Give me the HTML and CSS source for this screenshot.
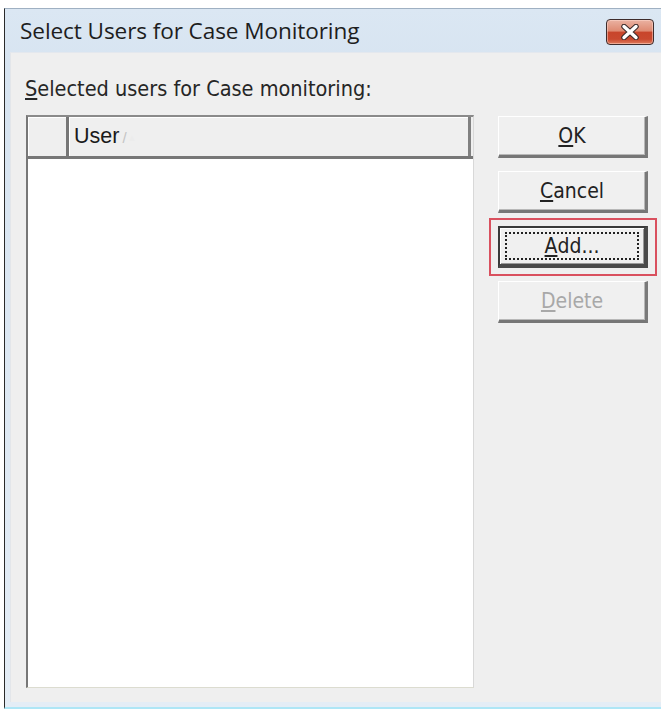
FILE: index.html
```html
<!DOCTYPE html>
<html lang="en">
<head>
<meta charset="utf-8">
<title>Select Users for Case Monitoring</title>
<link rel="stylesheet" href="styles.css">
</head>
<body>
<div class="window">
  <div class="titlebar">
    <span class="title">Select Users for Case Monitoring</span>
    <button class="close" aria-label="Close">
      <svg width="24" height="16" viewBox="0 0 24 16">
        <path d="M6 2.5 L18 13.5 M18 2.5 L6 13.5" stroke="#3b2b2b" stroke-width="5.5" stroke-linecap="round"/>
        <path d="M6 2.5 L18 13.5 M18 2.5 L6 13.5" stroke="#ffffff" stroke-width="3.4" stroke-linecap="round"/>
      </svg>
    </button>
  </div>
  <div class="client">
    <div class="caption"><u>S</u>elected users for Case monitoring:</div>
    <div class="body">
      <div class="listview">
        <div class="lv-header">
          <div class="lv-col lv-col-icon"></div>
          <div class="lv-col lv-col-user">User <span class="sort">/<span class="sort-tip">&#9650;</span></span></div>
        </div>
        <div class="lv-rows"></div>
      </div>
      <div class="buttons">
        <button class="btn"><u>O</u>K</button>
        <button class="btn"><u>C</u>ancel</button>
        <div class="focus-mark">
          <button class="btn btn-default"><span class="focus-rect"><u>A</u>dd...</span></button>
        </div>
        <button class="btn" disabled><u>D</u>elete</button>
      </div>
    </div>
  </div>
</div>
</body>
</html>
```
FILE: styles.css
```css
html, body {
  margin: 0;
  padding: 0;
  background: #ffffff;
  overflow: hidden;
  height: 709px;
}

.window {
  margin: 8px 0 0 4px;
  width: 664px;
  height: 701px;
  box-sizing: border-box;
  border-left: 1px solid #2a2a2a;
  border-top: 1px solid #9fb0c2;
  border-bottom: 2px solid #aee6f6;
  background: linear-gradient(#dbe7f3, #d7e4f1 60px, #e4edf6);
  display: flex;
  flex-direction: column;
  padding: 0 0 5px 5px;
}

.titlebar {
  height: 43px;
  display: flex;
  align-items: center;
  justify-content: space-between;
  padding: 0 14px 0 10px;
}

.title {
  font-family: "Open Sans", "DejaVu Sans", sans-serif;
  font-size: 22.6px;
  color: #1e1e1e;
  letter-spacing: -0.1px;
}

.close {
  width: 48px;
  height: 26px;
  margin-top: 2px;
  border: 1px solid #3e2c2c;
  border-radius: 4px;
  background: linear-gradient(#eab2a2 0%, #de8a72 45%, #c8452b 52%, #c9492f 80%, #e07c5c 100%);
  display: flex;
  align-items: center;
  justify-content: center;
  padding: 0;
  box-shadow: inset 0 0 0 1px rgba(255, 220, 210, 0.5);
}

.client {
  flex: 1;
  background: #efefef;
  border-top: 1px solid #e4e8ee;
  border-left: 1px solid #e3e6ea;
  padding: 24px 14px 0 14px;
  display: flex;
  flex-direction: column;
  font-family: "DejaVu Sans Condensed", "DejaVu Sans", sans-serif;
}

.caption {
  font-size: 21.5px;
  color: #262626;
  height: 38px;
  line-height: 30px;
  margin-top: -3px;
  margin-bottom: 3px;
}

.body {
  display: flex;
  gap: 24px;
  align-items: flex-start;
}

.listview {
  width: 448px;
  height: 573px;
  box-sizing: border-box;
  margin-left: 1px;
  border-left: 2px solid #777777;
  border-top: 2px solid #8a8a8a;
  border-right: 1px solid #d8d8d8;
  border-bottom: 1px solid #dcdcd0;
  background: #ffffff;
  display: flex;
  flex-direction: column;
}

.lv-header {
  height: 42px;
  display: flex;
  background: #efefef;
  border-bottom: 3px solid #777777;
  box-sizing: border-box;
  font-family: "Liberation Sans", Arial, sans-serif;
}

.lv-col {
  display: flex;
  align-items: center;
  box-sizing: border-box;
}

.lv-col-icon {
  width: 41px;
  border-right: 3px solid #777777;
  box-shadow: inset 1px 1px 0 #ffffff;
}

.lv-col-user {
  flex: 1;
  padding-left: 5px;
  font-size: 21.5px;
  color: #1a1a1a;
  border-right: 3px solid #808080;
  margin-right: 2px;
  box-shadow: inset 1px 1px 0 #ffffff;
}

.sort {
  color: #c4c4c4;
  font-size: 15px;
  margin-left: 3px;
  margin-top: 2px;
  display: flex;
  align-items: center;
}

.sort-tip {
  color: #ececec;
  font-size: 9px;
  margin-left: 1px;
}

.lv-rows {
  flex: 1;
}

.buttons {
  display: flex;
  flex-direction: column;
  gap: 13px;
  margin-top: 1px;
}

.btn {
  width: 150px;
  height: 42px;
  box-sizing: border-box;
  background: #f0f0f0;
  border-style: solid;
  border-width: 1px 3px 3px 1px;
  border-color: #ffffff #7a7a7a #767676 #ffffff;
  box-shadow: inset -1px -1px 0 #b8b8b8;
  font-family: "DejaVu Sans Condensed", "DejaVu Sans", sans-serif;
  font-size: 21px;
  color: #222222;
  padding: 0;
  display: flex;
  align-items: center;
  justify-content: center;
}

.btn:disabled {
  color: #a8a8a8;
}

.focus-mark {
  margin: -8px -9px;
  padding: 6px 7px;
  border: 2px solid #d9505e;
  width: 150px;
  height: 42px;
  box-sizing: content-box;
}

.btn-default {
  border-width: 2px 4px 4px 2px;
  border-color: #3a3a3a #4a4a4a #4a4a4a #3a3a3a;
  box-shadow: inset 1px 1px 0 #ffffff, inset -1px -1px 0 #9a9a9a;
}

.focus-rect {
  width: 134px;
  height: 28px;
  box-sizing: border-box;
  border: 2px dotted #222222;
  display: flex;
  align-items: center;
  justify-content: center;
}
```
